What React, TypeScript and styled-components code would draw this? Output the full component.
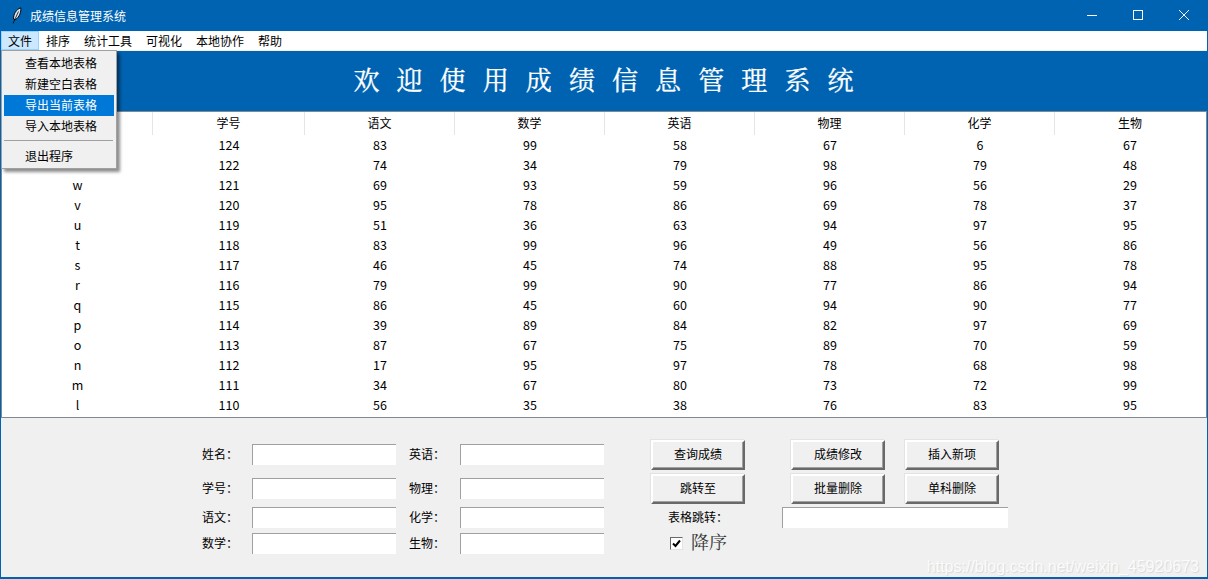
import React from "react";
import styled, { createGlobalStyle } from "styled-components";

const GlobalStyle = createGlobalStyle`
  html, body {
    margin: 0;
    padding: 0;
    background: #f0f0f0;
  }
  * {
    box-sizing: border-box;
  }
`;

const FONT = `"Noto Sans CJK SC", "Noto Sans", sans-serif`;

const Window = styled.div`
  position: relative;
  width: 1208px;
  height: 579px;
  display: flex;
  flex-direction: column;
  overflow: hidden;
  background: #f0f0f0;
  border: 1px solid #0063b1;
  border-top: 0;
  border-bottom-width: 2px;
  font-family: ${FONT};
  font-size: 12px;
  color: #000;
`;

const TitleBar = styled.div`
  height: 31px;
  margin: 0 -1px;
  background: #0063b1;
  color: #fff;
  display: flex;
  align-items: center;
  padding: 0 1px 0 12px;
  flex-shrink: 0;
`;

const TitleText = styled.span`
  margin-left: 8px;
  line-height: 31px;
`;

const WindowButtons = styled.div`
  margin-left: auto;
  display: flex;
`;

const WindowButton = styled.div`
  width: 46px;
  height: 30px;
  margin-bottom: 1px;
  display: flex;
  align-items: center;
  justify-content: center;
`;

const MenuBar = styled.div`
  height: 19px;
  background: #fff;
  display: flex;
  flex-shrink: 0;
`;

const MenuItem = styled.div<{ $active?: boolean }>`
  padding: 0 7px;
  height: 19px;
  line-height: 19px;
  background: ${props => (props.$active ? "#cce8ff" : "transparent")};
  outline: ${props => (props.$active ? "1px solid #99d1ff" : "none")};
  outline-offset: -1px;
`;

const Gap = styled.div`
  height: 1px;
  background: #f0f0f0;
  flex-shrink: 0;
`;

const Banner = styled.div`
  height: 60px;
  background: #0063b1;
  color: #fff;
  display: flex;
  align-items: center;
  justify-content: center;
  flex-shrink: 0;
  font-family: "Noto Serif CJK SC", "Liberation Serif", ${FONT};
  font-size: 26px;
  letter-spacing: 17.1px;
  padding: 0 0 5px 16px;
  -webkit-text-stroke: 0.3px #fff;
`;

const TableBox = styled.div`
  height: 307px;
  background: #fff;
  border: 1px solid #828790;
  flex-shrink: 0;
  overflow: hidden;
`;

const TableRow = styled.div<{ $header?: boolean }>`
  display: grid;
  grid-template-columns: 151px 152px repeat(6, 150px);
  height: ${props => (props.$header ? "23px" : "20px")};
  margin-bottom: ${props => (props.$header ? "1px" : "0")};
`;

const Cell = styled.div`
  text-align: center;
  line-height: 18px;
  font-size: 12.5px;
`;

const HeadCell = styled.div`
  text-align: center;
  line-height: 21px;
  font-size: 12px;
  border-right: 1px solid #e5e5e5;
  &:last-child {
    border-right: 0;
  }
`;

const Panel = styled.div`
  flex: 1;
  display: flex;
  padding: 22px 0 0 201px;
  align-items: flex-start;
`;

const Form = styled.div`
  width: 449px;
  padding-top: 4px;
  flex-shrink: 0;
`;

const FormRow = styled.div<{ $top?: number }>`
  display: grid;
  grid-template-columns: 50px 157px 51px 144px;
  height: 21px;
  margin-top: ${props => props.$top ?? 0}px;
`;

const FieldLabel = styled.div`
  line-height: 19px;
`;

const Field = styled.div<{ $span?: boolean }>`
  width: ${props => (props.$span ? "auto" : "144px")};
  height: 21px;
  background: #fff;
  border-top: 1px solid #a0a0a0;
  border-left: 1px solid #a0a0a0;
  grid-column: ${props => (props.$span ? "3 / 8" : "auto")};
`;

const Actions = styled.div`
  display: grid;
  grid-template-columns: 94px 37px 9px 94px 20px 94px 9px;
  grid-template-rows: 30px 31px 21px 24px;
  row-gap: 3px;
`;

const ActionButton = styled.div<{ $col: number }>`
  grid-column: ${props => props.$col};
  align-self: end;
  height: 30px;
  line-height: 24px;
  text-align: center;
  background: #f0f0f0;
  border: 2px solid;
  border-color: #fff #696969 #696969 #fff;
  box-shadow: inset -1px -1px 0 #a0a0a0, -1px -1px 0 #e3e3e3;
`;

const JumpLabel = styled.div`
  grid-column: 1 / 3;
  padding-left: 17px;
  line-height: 19px;
`;

const SortRow = styled.div`
  grid-column: 1 / 4;
  display: flex;
  align-items: center;
  padding-left: 19px;
`;

const CheckBox = styled.div`
  width: 13px;
  height: 13px;
  background: #fff;
  border: 1px solid;
  border-color: #696969 #e3e3e3 #e3e3e3 #696969;
  display: flex;
  align-items: center;
  justify-content: center;
`;

const SortText = styled.span`
  margin-left: 8px;
  padding-bottom: 4px;
  font-family: "Noto Serif CJK SC", "Liberation Serif", ${FONT};
  font-size: 18px;
  color: #333;
`;

const Watermark = styled.div`
  position: absolute;
  right: 8px;
  bottom: 1px;
  font-family: "Liberation Sans", sans-serif;
  font-size: 16px;
  color: #fbfbfb;
  text-shadow: 1px 1px 1px rgba(0, 0, 0, 0.1);
`;

const Menu = styled.div`
  position: absolute;
  left: 0;
  top: 50px;
  width: 116px;
  height: 119px;
  padding: 2px;
  background: #f0f0f0;
  border: 1px solid #a0a0a0;
  box-shadow: 3px 3px 3px rgba(0, 0, 0, 0.45);
`;

const DropItem = styled.div<{ $active?: boolean }>`
  height: 21px;
  line-height: 19px;
  padding-left: 21px;
  background: ${props => (props.$active ? "#0078d7" : "transparent")};
  color: ${props => (props.$active ? "#fff" : "#000")};
`;

const DropSeparator = styled.div`
  height: 1px;
  background: #a0a0a0;
  margin: 3px 1px 5px 0;
`;

const headers = ["", "学号", "语文", "数学", "英语", "物理", "化学", "生物"];

// the names of the first two rows sit behind the open menu
const rows: (string | number)[][] = [
  ["", 124, 83, 99, 58, 67, 6, 67],
  ["", 122, 74, 34, 79, 98, 79, 48],
  ["w", 121, 69, 93, 59, 96, 56, 29],
  ["v", 120, 95, 78, 86, 69, 78, 37],
  ["u", 119, 51, 36, 63, 94, 97, 95],
  ["t", 118, 83, 99, 96, 49, 56, 86],
  ["s", 117, 46, 45, 74, 88, 95, 78],
  ["r", 116, 79, 99, 90, 77, 86, 94],
  ["q", 115, 86, 45, 60, 94, 90, 77],
  ["p", 114, 39, 89, 84, 82, 97, 69],
  ["o", 113, 87, 67, 75, 89, 70, 59],
  ["n", 112, 17, 95, 97, 78, 68, 98],
  ["m", 111, 34, 67, 80, 73, 72, 99],
  ["l", 110, 56, 35, 38, 76, 83, 95],
];

const formRows = [
  { top: 0, left: "姓名\uff1a", right: "英语\uff1a" },
  { top: 13, left: "学号\uff1a", right: "物理\uff1a" },
  { top: 8, left: "语文\uff1a", right: "化学\uff1a" },
  { top: 5, left: "数学\uff1a", right: "生物\uff1a" },
];

const menus = ["文件", "排序", "统计工具", "可视化", "本地协作", "帮助"];

const App = () => {
  return (
    <Window>
      <GlobalStyle />
      <TitleBar>
        <svg width="10" height="17" viewBox="0 0 10 17">
          <path d="M1.5 12 C1.5 7 4 2.5 8.8 0.8 C9.2 5 7.6 10 3.4 12.6 Z" fill="#dce6f2" stroke="#000" strokeWidth="1" />
          <path d="M1 16.5 L6.5 4.5" stroke="#000" strokeWidth="0.8" />
        </svg>
        <TitleText>成绩信息管理系统</TitleText>
        <WindowButtons>
          <WindowButton>
            <svg width="10" height="10" viewBox="0 0 10 10">
              <path d="M0 5.5 H10" stroke="#fff" />
            </svg>
          </WindowButton>
          <WindowButton>
            <svg width="10" height="10" viewBox="0 0 10 10">
              <rect x="0.5" y="0.5" width="9" height="9" fill="none" stroke="#fff" />
            </svg>
          </WindowButton>
          <WindowButton>
            <svg width="10" height="10" viewBox="0 0 10 10">
              <path d="M0 0 L10 10 M10 0 L0 10" stroke="#fff" />
            </svg>
          </WindowButton>
        </WindowButtons>
      </TitleBar>
      <MenuBar>
        {menus.map((name, index) => (
          <MenuItem key={name} $active={index === 0}>
            {name}
          </MenuItem>
        ))}
      </MenuBar>
      <Gap />
      <Banner>欢迎使用成绩信息管理系统</Banner>
      <TableBox>
        <TableRow $header>
          {headers.map((name, index) => (
            <HeadCell key={index}>{name}</HeadCell>
          ))}
        </TableRow>
        {rows.map(row => (
          <TableRow key={row[1]}>
            {row.map((value, index) => (
              <Cell key={index}>{value}</Cell>
            ))}
          </TableRow>
        ))}
      </TableBox>
      <Panel>
        <Form>
          {formRows.map(item => (
            <FormRow key={item.left} $top={item.top}>
              <FieldLabel>{item.left}</FieldLabel>
              <Field />
              <FieldLabel>{item.right}</FieldLabel>
              <Field />
            </FormRow>
          ))}
        </Form>
        <Actions>
          <ActionButton $col={1}>查询成绩</ActionButton>
          <ActionButton $col={4}>成绩修改</ActionButton>
          <ActionButton $col={6}>插入新项</ActionButton>
          <ActionButton $col={1}>跳转至</ActionButton>
          <ActionButton $col={4}>批量删除</ActionButton>
          <ActionButton $col={6}>单科删除</ActionButton>
          <JumpLabel>{"表格跳转\uff1a"}</JumpLabel>
          <Field $span />
          <SortRow>
            <CheckBox>
              <svg width="9" height="9" viewBox="0 0 9 9">
                <path d="M1 4.5 L3.5 7 L8 1.5" fill="none" stroke="#000" strokeWidth="2" />
              </svg>
            </CheckBox>
            <SortText>降序</SortText>
          </SortRow>
        </Actions>
      </Panel>
      <Watermark>https://blog.csdn.net/weixin_45920673</Watermark>
      <Menu>
        <DropItem>查看本地表格</DropItem>
        <DropItem>新建空白表格</DropItem>
        <DropItem $active>导出当前表格</DropItem>
        <DropItem>导入本地表格</DropItem>
        <DropSeparator />
        <DropItem>退出程序</DropItem>
      </Menu>
    </Window>
  );
};

export default App;
